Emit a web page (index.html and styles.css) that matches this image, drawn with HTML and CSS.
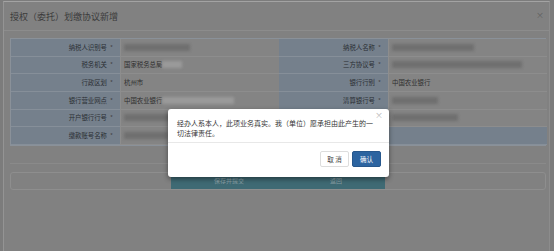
FILE: index.html
```html
<!DOCTYPE html>
<html lang="zh-CN">
<head>
    <meta charset="UTF-8">
    <title>授权（委托）划缴协议新增</title>
    <link rel="stylesheet" href="styles.css">
</head>
<body>
    <div class="screen">
        <div class="panel">
            <div class="panel-head">
                <span class="title">授权（委托）划缴协议新增</span>
                <span class="head-close">×</span>
            </div>
            <div class="panel-body">
                <div class="form-grid">
                    <div class="lbl">纳税人识别号 <i>*</i></div>
                    <div class="val"><span class="blur" style="width:66px"></span></div>
                    <div class="lbl">纳税人名称 <i>*</i></div>
                    <div class="val"><span class="blur" style="width:82px"></span></div>

                    <div class="lbl">税务机关 <i>*</i></div>
                    <div class="val">国家税务总局<span class="blur light" style="width:20px"></span></div>
                    <div class="lbl">三方协议号 <i>*</i></div>
                    <div class="val"><span class="blur" style="width:130px"></span></div>

                    <div class="lbl">行政区划 <i>*</i></div>
                    <div class="val">杭州市</div>
                    <div class="lbl">银行行别 <i>*</i></div>
                    <div class="val">中国农业银行</div>

                    <div class="lbl">银行营业网点 <i>*</i></div>
                    <div class="val">中国农业银行<span class="blur light" style="width:72px"></span></div>
                    <div class="lbl">清算银行号 <i>*</i></div>
                    <div class="val"><span class="blur" style="width:46px"></span></div>

                    <div class="lbl">开户银行行号 <i>*</i></div>
                    <div class="val"><span class="blur" style="width:60px"></span></div>
                    <div class="lbl">缴款账号 <i>*</i></div>
                    <div class="val"><span class="blur" style="width:66px"></span></div>

                    <div class="lbl">缴款账号名称 <i>*</i></div>
                    <div class="val"><span class="blur" style="width:44px"></span></div>
                    <div class="lbl"></div>
                    <div class="lbl"></div>
                </div>
                <div class="form-foot"></div>
                <div class="btn-bar">
                    <div class="bar-side"></div>
                    <div class="bar-main">
                        <span>保存并提交</span>
                        <span>返回</span>
                    </div>
                    <div class="bar-side"></div>
                </div>
            </div>
        </div>

        <div class="dialog">
            <div class="dlg-body">
                <div class="dlg-text">经办人系本人，此项业务真实。我（单位）愿承担由此产生的一切法律责任。</div>
                <span class="dlg-close">×</span>
            </div>
            <div class="dlg-foot">
                <button class="btn btn-cancel">取 消</button>
                <button class="btn btn-ok">确认</button>
            </div>
        </div>
    </div>
</body>
</html>
```

FILE: styles.css
```css
body{
    margin:0;
    background-color:#7c7c7c;
    overflow:hidden;
    font-family:"Noto Sans CJK SC","Liberation Sans",sans-serif;
}

.screen{
    position:relative;
    width:554px;
    height:251px;
}

.panel{
    margin:1px 4px 0 3px;
    height:250px;
    background-color:#818181;
    border-top:1px solid #a3a3a3;
    border-left:1px solid #949494;
    border-right:1px solid #8c8c8c;
    box-sizing:border-box;
}

.panel-head{
    height:28px;
    padding:0 5px 0 6px;
    display:flex;
    align-items:center;
    justify-content:space-between;
    border-bottom:1px solid #8c8c8c;
}

.title{
    font-size:9px;
    color:#3b3b3b;
}

.head-close{
    font-size:8px;
    color:#5e5e5e;
    margin-top:-4px;
}

.panel-body{
    padding:7px 3px 0 6px;
}

.form-grid{
    display:grid;
    grid-template-columns:109px 159px 109px 159px;
    grid-auto-rows:17.66px;
    background-color:#7a838d;
    border:1px solid #8a9199;
    box-sizing:border-box;
}

.lbl{
    background-color:#75808c;
    border-bottom:1px solid #868f99;
    font-size:6.4px;
    color:#2a2e33;
    display:flex;
    align-items:center;
    justify-content:flex-end;
    padding-right:7px;
}

.lbl i{
    font-style:normal;
    margin-left:3px;
    color:#444;
}

.val{
    background-color:#848484;
    border-bottom:1px solid #8d8d8d;
    border-left:1px solid #8d8d8d;
    font-size:6.4px;
    color:#2e2e2e;
    display:flex;
    align-items:center;
    padding-left:3px;
}

.blur{
    display:inline-block;
    height:7px;
    background-color:#6f6f6f;
    filter:blur(1.5px);
}

.blur.light{
    background-color:#9a9a9a;
}

.form-foot{
    height:17px;
    border-bottom:1px solid #8a8a8a;
}

.btn-bar{
    margin-top:8px;
    height:18px;
    display:flex;
    border:1px solid #8e8e8e;
    border-radius:3px;
    box-sizing:border-box;
}

.bar-side{
    flex:1;
}

.bar-main{
    width:214px;
    background-color:#3f6a74;
    display:flex;
    align-items:center;
    justify-content:space-around;
    font-size:6px;
    color:#8aa0a6;
}

.dialog{
    position:absolute;
    left:168px;
    top:108px;
    width:221px;
    height:68px;
    background-color:#fff;
    border-radius:3px;
    box-shadow:0 2px 5px rgba(0,0,0,0.45);
}

.dlg-body{
    height:34px;
    padding:9px 6px 0 9px;
    box-sizing:border-box;
    display:flex;
    border-bottom:1px solid #e8e8e8;
}

.dlg-text{
    width:197px;
    font-size:7px;
    line-height:10px;
    color:#333;
}

.dlg-close{
    margin:-9px 0 0 auto;
    font-size:8px;
    line-height:12px;
    color:#b5b5b5;
}

.dlg-foot{
    display:flex;
    justify-content:flex-end;
    gap:3px;
    padding:8px 8px 0 0;
}

.btn{
    width:29px;
    height:16px;
    font-family:"Noto Sans CJK SC",sans-serif;
    font-size:6.5px;
    border-radius:2px;
    padding:0;
    cursor:pointer;
}

.btn-cancel{
    background-color:#fff;
    border:1px solid #ddd;
    color:#444;
}

.btn-ok{
    background-color:#2c64a0;
    border:1px solid #26578c;
    color:#fff;
}
```
